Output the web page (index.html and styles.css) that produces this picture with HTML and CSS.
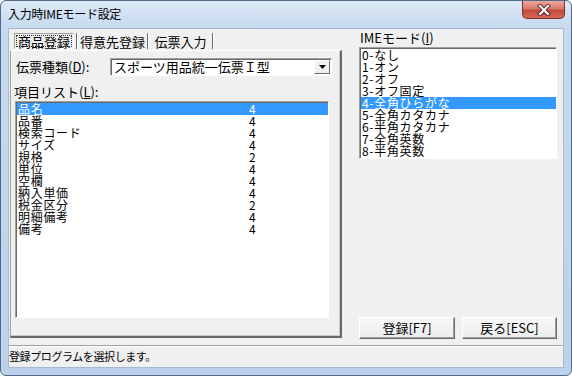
FILE: index.html
```html
<!DOCTYPE html>
<html lang="ja">
<head>
  <meta charset="UTF-8">
  <title>入力時IMEモード設定</title>
  <link rel="stylesheet" href="styles.css">
</head>
<body>
  <div class="window">
    <div class="titlebar">
      <span class="title">入力時IMEモード設定</span>
      <div class="close">
        <svg width="16" height="12" viewBox="0 0 16 12">
          <path d="M4 2 L12 10 M12 2 L4 10" stroke="#5a2020" stroke-width="4" stroke-linecap="square"/>
          <path d="M4 2 L12 10 M12 2 L4 10" stroke="#fff" stroke-width="2.2" stroke-linecap="square"/>
        </svg>
      </div>
    </div>

    <div class="client">
      <div class="main">
        <div class="left">
          <div class="tabs">
            <span class="tab active"><span class="focus">商品登録</span></span>
            <span class="sep"></span>
            <span class="tab tab-wide">得意先登録</span>
            <span class="sep"></span>
            <span class="tab tab-last">伝票入力</span>
            <span class="sep"></span>
          </div>
          <div class="page">
            <div class="field">
              <span class="label">伝票種類(<u>D</u>):</span>
              <div class="combo">
                <span class="combo-text">スポーツ用品統一伝票Ｉ型</span>
                <span class="drop">
                  <svg width="7" height="4" viewBox="0 0 7 4"><path d="M0 0 H7 L3.5 4 Z" fill="#000"/></svg>
                </span>
              </div>
            </div>
            <div class="caption">項目リスト(<u>L</u>):</div>
            <div class="listbox items">
              <div class="row selected"><span class="name">品名</span><span>4</span></div>
              <div class="row"><span class="name">品番</span><span>4</span></div>
              <div class="row"><span class="name">検索コード</span><span>4</span></div>
              <div class="row"><span class="name">サイズ</span><span>4</span></div>
              <div class="row"><span class="name">規格</span><span>2</span></div>
              <div class="row"><span class="name">単位</span><span>4</span></div>
              <div class="row"><span class="name">空欄</span><span>4</span></div>
              <div class="row"><span class="name">納入単価</span><span>4</span></div>
              <div class="row"><span class="name">税金区分</span><span>2</span></div>
              <div class="row"><span class="name">明細備考</span><span>4</span></div>
              <div class="row"><span class="name">備考</span><span>4</span></div>
            </div>
          </div>
        </div>

        <div class="right">
          <div class="caption caption-top">IMEモード(<u>I</u>)</div>
          <div class="listbox modes">
            <div class="row">0-なし</div>
            <div class="row">1-オン</div>
            <div class="row">2-オフ</div>
            <div class="row">3-オフ固定</div>
            <div class="row selected">4-全角ひらがな</div>
            <div class="row">5-全角カタカナ</div>
            <div class="row">6-半角カタカナ</div>
            <div class="row">7-全角英数</div>
            <div class="row">8-半角英数</div>
          </div>
          <div class="buttons">
            <button class="btn">登録[F7]</button>
            <button class="btn btn-back">戻る[ESC]</button>
          </div>
        </div>
      </div>

      <div class="status">登録プログラムを選択します。</div>
    </div>
  </div>
</body>
</html>
```

FILE: styles.css
```css
body {
  margin: 0;
  padding: 0;
  background-color: #fff;
  font-family: "Noto Sans CJK JP", sans-serif;
  color: #000;
}

.window {
  width: 572px;
  height: 376px;
  box-sizing: border-box;
  border: 1px solid #4f6a88;
  border-radius: 6px;
  background: linear-gradient(to bottom, #dce8f6 0, #c6d9ef 28px, #bcd2ea 100%);
  padding: 0 7px 7px 7px;
  display: flex;
  flex-direction: column;
}

.titlebar {
  height: 27px;
  display: flex;
  align-items: flex-start;
}

.title {
  font-size: 12px;
  line-height: 12px;
  margin-top: 7px;
  letter-spacing: -0.3px;
}

.close {
  margin-left: auto;
  margin-right: -1px;
  width: 43px;
  height: 18px;
  box-sizing: border-box;
  border: 1px solid #7a3434;
  border-top: none;
  border-radius: 0 0 5px 5px;
  background: linear-gradient(to bottom, #e9a99c 0, #d77a6c 45%, #c24a3a 55%, #d06a55 100%);
  display: flex;
  align-items: center;
  justify-content: center;
}

.client {
  width: 556px;
  height: 340px;
  box-sizing: border-box;
  border: 1px solid #a6b9cf;
  background-color: #f0f0f0;
  display: flex;
  flex-direction: column;
}

.main {
  height: 316px;
  display: flex;
}

.left {
  width: 333px;
  padding-left: 1px;
}

.tabs {
  height: 17px;
  padding: 4px 0 0 4px;
  display: flex;
  align-items: stretch;
  font-size: 13px;
  line-height: 13px;
}

.tab {
  display: flex;
  align-items: center;
  justify-content: center;
  width: 69px;
  height: 16px;
}

.tab-last {
  width: 63px;
}

.tab.active {
  width: 60px;
  box-sizing: border-box;
  border: 1px solid;
  border-color: #a0a0a0 #fff #fff #a0a0a0;
  padding: 1px;
  margin-right: 2px;
}

.focus {
  flex-grow: 1;
  height: 100%;
  box-sizing: border-box;
  border: 1px dotted #333;
  display: flex;
  align-items: center;
  justify-content: center;
}

.sep {
  width: 1px;
  height: 16px;
  background-color: #696969;
  border-right: 1px solid #fff;
}

.page {
  width: 332px;
  height: 288px;
  box-sizing: border-box;
  border-left: 1px solid #a0a0a0;
  border-top: 1px solid #fff;
  border-right: 2px solid #696969;
  border-bottom: 2px solid #696969;
  box-shadow: inset -1px -1px 0 #c8c8c8;
}

.field {
  display: flex;
  align-items: center;
  height: 18px;
  margin-top: 7px;
  font-size: 13px;
}

.label {
  width: 94px;
  padding-left: 5px;
  line-height: 14px;
}

.combo {
  width: 222px;
  height: 18px;
  box-sizing: border-box;
  border: 1px solid;
  border-color: #a0a0a0 #fff #fff #a0a0a0;
  box-shadow: inset 1px 1px 0 #696969;
  background-color: #fff;
  display: flex;
  align-items: center;
  padding: 1px 1px 1px 3px;
}

.combo-text {
  flex-grow: 1;
  line-height: 14px;
}

.drop {
  width: 16px;
  height: 14px;
  box-sizing: border-box;
  background-color: #f0f0f0;
  border: 1px solid;
  border-color: #fff #696969 #696969 #fff;
  display: flex;
  align-items: center;
  justify-content: center;
}

.caption {
  font-size: 13px;
  line-height: 14px;
  margin-top: 9px;
  padding-left: 3px;
}

.caption-top {
  margin-top: 2px;
  padding-left: 1px;
}

.listbox {
  box-sizing: border-box;
  border: 1px solid;
  border-color: #a0a0a0 #fff #fff #a0a0a0;
  box-shadow: inset 1px 1px 0 #696969;
  padding: 1px 0 0 1px;
  background-color: #fff;
  font-size: 12px;
  letter-spacing: 0.7px;
  overflow: hidden;
}

.items {
  width: 314px;
  height: 217px;
  margin: 2px 0 0 4px;
}

.modes {
  width: 198px;
  height: 112px;
  margin-top: 2px;
}

.row {
  height: 12px;
  line-height: 12px;
  padding-left: 1px;
  display: flex;
  white-space: nowrap;
}

.row.selected {
  background-color: #3399ff;
  color: #fff;
}

.name {
  width: 231px;
}

.right {
  width: 198px;
  margin-left: 16px;
  display: flex;
  flex-direction: column;
}

.buttons {
  margin-top: auto;
  margin-bottom: 6px;
  display: flex;
  gap: 7px;
}

.btn {
  width: 96px;
  height: 22px;
  padding: 0;
  font-family: "Noto Sans CJK JP", sans-serif;
  font-size: 13px;
  line-height: 14px;
  color: #000;
  background: linear-gradient(to bottom, #f8f8f8, #ececec);
  border: 1px solid;
  border-color: #fff #696969 #696969 #fff;
  box-shadow: inset -1px -1px 0 #a0a0a0;
}

.btn-back {
  width: 95px;
}

.status {
  height: 20px;
  border-top: 1px solid #a0a0a0;
  box-shadow: inset 0 1px 0 #fff;
  font-size: 11px;
  line-height: 20px;
  letter-spacing: -0.4px;
}
```
